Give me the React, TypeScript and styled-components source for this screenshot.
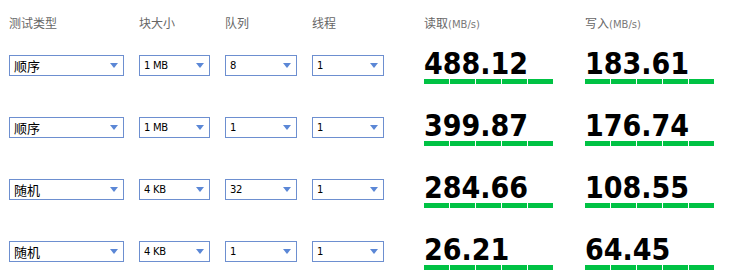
import React, { ReactElement } from 'react'
import styled, { createGlobalStyle } from 'styled-components'

const GlobalStyle = createGlobalStyle`
  html, body {
    margin: 0;
    padding: 0;
    background: #ffffff;
  }
`

const rows = [
  { type: '顺序', block: '1 MB', queue: '8', thread: '1', read: '488.12', write: '183.61' },
  { type: '顺序', block: '1 MB', queue: '1', thread: '1', read: '399.87', write: '176.74' },
  { type: '随机', block: '4 KB', queue: '32', thread: '1', read: '284.66', write: '108.55' },
  { type: '随机', block: '4 KB', queue: '1', thread: '1', read: '26.21', write: '64.45' },
]

function Select(props: { value: string, width: number, cjk?: boolean }): ReactElement {
  return (
    <SelectBox $width={ props.width }>
      <SelectText $cjk={ props.cjk }>{ props.value }</SelectText>
      <Arrow />
    </SelectBox>
  )
}

function Result(props: { value: string }): ReactElement {
  return (
    <ResultCell>
      <Number>{ props.value }</Number>
      <Bar>
        { [0, 1, 2, 3, 4].map((i: number) => <Segment key={ i } />) }
      </Bar>
    </ResultCell>
  )
}

export default function App(): ReactElement {
  return (
    <>
      <GlobalStyle />
      <Grid>
        <Header>测试类型</Header>
        <Header>块大小</Header>
        <Header>队列</Header>
        <Header>线程</Header>
        <Header>读取<Unit>(MB/s)</Unit></Header>
        <Header>写入<Unit>(MB/s)</Unit></Header>
        {
          rows.map((row, index: number) => (
            <React.Fragment key={ index }>
              <Cell><Select value={ row.type } width={ 115 } cjk /></Cell>
              <Cell><Select value={ row.block } width={ 71 } /></Cell>
              <Cell><Select value={ row.queue } width={ 72 } /></Cell>
              <Cell><Select value={ row.thread } width={ 72 } /></Cell>
              <Cell><Result value={ row.read } /></Cell>
              <Cell><Result value={ row.write } /></Cell>
            </React.Fragment>
          ))
        }
      </Grid>
    </>
  )
}

const Grid = styled.div`
  display: grid;
  grid-template-columns: 130px 86px 87px 112px 161px 145px;
  grid-template-rows: 55px repeat(3, 62px) auto;
  padding-left: 9px;
  width: 730px;
  height: 278px;
  overflow: hidden;
  box-sizing: border-box;
`

const Header = styled.div`
  color: #666666;
  font-family: 'Noto Sans CJK SC', sans-serif;
  font-size: 12px;
  line-height: 16px;
  padding-top: 15px;
`

const Unit = styled.span`
  font-family: 'DejaVu Sans', sans-serif;
  font-size: 10px;
  color: #7a7a7a;
`

const Cell = styled.div`
  display: flex;
  align-items: flex-start;
`

const SelectBox = styled.div<{ $width: number }>`
  width: ${ p => p.$width }px;
  height: 21px;
  box-sizing: border-box;
  border: 1px solid #6d8fd0;
  background: #ffffff;
  display: flex;
  align-items: center;
  justify-content: space-between;
  padding: 0 5px 0 4px;
`

const SelectText = styled.span<{ $cjk?: boolean }>`
  color: #000000;
  font-family: ${ p => p.$cjk ? "'Noto Sans CJK SC', sans-serif" : "'DejaVu Sans', sans-serif" };
  font-size: ${ p => p.$cjk ? '13px' : '10px' };
  letter-spacing: ${ p => p.$cjk ? '0' : '-0.3px' };
  line-height: 19px;
`

const Arrow = styled.span`
  width: 0;
  height: 0;
  border-left: 4px solid transparent;
  border-right: 4px solid transparent;
  border-top: 5px solid #5b87d6;
  margin-top: -1px;
`

const ResultCell = styled.div`
  display: flex;
  flex-direction: column;
  margin-top: -6px;
`

const Number = styled.div`
  font-family: 'DejaVu Sans Condensed', 'DejaVu Sans', sans-serif;
  font-stretch: condensed;
  font-weight: bold;
  font-size: 30px;
  line-height: 30px;
  color: #000000;
`

const Bar = styled.div`
  display: flex;
  gap: 1px;
`

const Segment = styled.div`
  width: 25px;
  height: 5px;
  background: #00c244;
`
